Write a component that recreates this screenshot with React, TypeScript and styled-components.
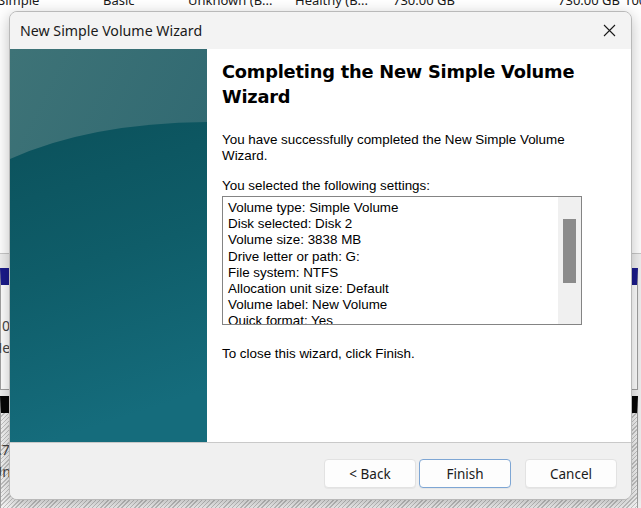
import React from "react";
import styled, { createGlobalStyle } from "styled-components";

const Global = createGlobalStyle`
  html, body { margin: 0; padding: 0; }
  body { width: 641px; height: 508px; overflow: hidden; background: #ffffff; }
`;

const Backdrop = styled.div`
  position: relative;
  width: 641px;
  height: 508px;
  overflow: hidden;
  display: flex;
  flex-direction: column;
  font-family: "Noto Sans", "Open Sans", sans-serif;
  font-size: 13px;
  color: #1a1a1a;
  background: #ffffff;
`;

const ListView = styled.div`
  height: 263px;
  margin-top: -10px;
  flex-shrink: 0;
  background: #ffffff;
  border-bottom: 1px solid #c8c8c8;
  display: flex;
  flex-direction: column;
`;

const ListRow = styled.div`
  display: grid;
  grid-template-columns: 105px 85px 107px 98px 77px 150px 50px;
  height: 20px;
  align-items: center;
  white-space: nowrap;
  margin-left: -2px;
`;

const Cell = styled.span<{ $right?: boolean; $pl?: number }>`
  text-align: ${(p) => (p.$right ? "right" : "left")};
  padding-left: ${(p) => p.$pl ?? 0}px;
  overflow: hidden;
`;

const GraphView = styled.div`
  flex: 1;
  background: #f0f0f0;
  display: flex;
  flex-direction: column;
  gap: 6px;
  padding-top: 14px;
`;

const Partition = styled.div<{ $head: string; $hatched?: boolean; $h: number }>`
  height: ${(p) => p.$h}px;
  flex-shrink: 0;
  margin-right: 3px;
  border: 1px solid #a0a0a0;
  border-top: 17px solid ${(p) => p.$head};
  background: ${(p) =>
    p.$hatched
      ? "repeating-linear-gradient(135deg, #f4f4f4 0 2px, #c4c4c4 2px 3px)"
      : "#ffffff"};
  display: flex;
  flex-direction: column;
  justify-content: center;
  line-height: 22px;
  font-size: 14px;
  color: #444;
`;

const PartText = styled.span<{ $shift: number }>`
  margin-left: ${(p) => p.$shift}px;
  white-space: nowrap;
`;

const Dialog = styled.div`
  position: absolute;
  left: 9px;
  top: 11px;
  width: 621px;
  height: 487px;
  border: 1px solid #b9b9b9;
  border-radius: 8px;
  background: #f0f0f0;
  box-shadow: 0 4px 16px rgba(0, 0, 0, 0.25);
  display: flex;
  flex-direction: column;
  overflow: hidden;
`;

const TitleBar = styled.div`
  height: 37px;
  flex-shrink: 0;
  display: flex;
  align-items: center;
  justify-content: space-between;
  padding: 0 15px 0 10px;
  background: #f3f3f3;
  font-family: "Noto Sans", "Open Sans", sans-serif;
  font-size: 14.2px;
  color: #1a1a1a;
`;

const CloseButton = styled.button`
  border: none;
  background: transparent;
  padding: 0;
  width: 14px;
  height: 14px;
  display: flex;
  align-items: center;
  justify-content: center;
`;

const Body = styled.div`
  height: 393px;
  flex-shrink: 0;
  display: flex;
  background: #ffffff;
  border-bottom: 1px solid #c9c9c9;
`;

const Banner = styled.div`
  width: 197px;
  flex-shrink: 0;
  display: flex;
`;

const Content = styled.div`
  flex: 1;
  padding: 10px 0 0 15px;
  display: flex;
  flex-direction: column;
  font-family: "Liberation Sans", Arial, sans-serif;
  font-size: 13.4px;
  color: #000;
`;

const Heading = styled.h1`
  margin: 0;
  font-family: "DejaVu Sans", Verdana, sans-serif;
  font-weight: bold;
  font-size: 17.8px;
  line-height: 25px;
  letter-spacing: -0.2px;
  color: #000;
  width: 390px;
`;

const Para = styled.p<{ $mt: number }>`
  margin: ${(p) => p.$mt}px 0 0 0;
  line-height: 16px;
  width: 360px;
`;

const SettingsBox = styled.div`
  margin-top: 2px;
  width: 358px;
  height: 127px;
  border: 1px solid #848484;
  display: flex;
  background: #ffffff;
`;

const SettingsList = styled.div`
  flex: 1;
  padding: 3px 0 0 5px;
  overflow: hidden;
  line-height: 16.2px;
  white-space: nowrap;
`;

const ScrollTrack = styled.div`
  width: 23px;
  background: #f0f0f0;
  padding-top: 22px;
  display: flex;
  justify-content: center;
`;

const ScrollThumb = styled.div`
  width: 13px;
  height: 64px;
  background: #8b8b8b;
`;

const Footer = styled.div`
  flex: 1;
  display: flex;
  align-items: center;
  justify-content: flex-end;
  padding: 5px 14px 0 0;
  background: #f0f0f0;
`;

const Btn = styled.button<{ $default?: boolean; $ml?: number }>`
  width: 92px;
  height: 29px;
  margin-left: ${(p) => p.$ml ?? 0}px;
  border: 1px solid ${(p) => (p.$default ? "#7ea6d4" : "#e2e2e2")};
  border-radius: 4px;
  background: #fdfdfd;
  font-family: "Noto Sans", "Open Sans", sans-serif;
  font-size: 13.5px;
  color: #1a1a1a;
  padding: 0;
  box-shadow: 0 1px 0 rgba(0, 0, 0, 0.04);
`;

const settings = [
  "Volume type: Simple Volume",
  "Disk selected: Disk 2",
  "Volume size: 3838 MB",
  "Drive letter or path: G:",
  "File system: NTFS",
  "Allocation unit size: Default",
  "Volume label: New Volume",
  "Quick format: Yes",
  "",
];

const topRow = ["Simple", "Basic", "Unknown (B...", "Healthy (B...", "730.00 GB", "730.00 GB", "100 %"];

const BannerArt = () => (
  <svg width="197" height="393" viewBox="0 0 197 393" preserveAspectRatio="none">
    <defs>
      <linearGradient id="topg" x1="0" y1="0" x2="1" y2="1">
        <stop offset="0" stopColor="#3e7377" />
        <stop offset="1" stopColor="#29646f" />
      </linearGradient>
      <linearGradient id="lowg" x1="0" y1="0" x2="0.2" y2="1">
        <stop offset="0" stopColor="#0b515b" />
        <stop offset="0.5" stopColor="#0f5d69" />
        <stop offset="1" stopColor="#156c7c" />
      </linearGradient>
    </defs>
    <rect x="0" y="0" width="197" height="393" fill="url(#topg)" />
    <path d="M0,110 Q80,74 197,73 L197,393 L0,393 Z" fill="url(#lowg)" />
  </svg>
);

export default function App() {
  return (
    <>
      <Global />
      <Backdrop>
        <ListView>
          <ListRow>
            {topRow.map((c, j) => (
              <Cell key={j} $right={j === 5} $pl={j === 6 ? 4 : 0}>
                {c}
              </Cell>
            ))}
          </ListRow>
        </ListView>
        <GraphView>
          <Partition $head="#1b1b8c" $h={104}>
            <PartText $shift={-7}>100 MB NTFS</PartText>
            <PartText $shift={-9}>Healthy (EFI)</PartText>
          </Partition>
          <Partition $head="#050505" $h={96} $hatched>
            <PartText $shift={-11}>3.75 GB</PartText>
            <PartText $shift={-9}>Unallocated</PartText>
          </Partition>
        </GraphView>

        <Dialog>
          <TitleBar>
            <span>New Simple Volume Wizard</span>
            <CloseButton aria-label="Close">
              <svg width="13" height="13" viewBox="0 0 13 13">
                <path d="M1 1 L12 12 M12 1 L1 12" stroke="#1a1a1a" strokeWidth="1.1" />
              </svg>
            </CloseButton>
          </TitleBar>
          <Body>
            <Banner>
              <BannerArt />
            </Banner>
            <Content>
              <Heading>Completing the New Simple Volume Wizard</Heading>
              <Para $mt={23}>You have successfully completed the New Simple Volume Wizard.</Para>
              <Para $mt={14}>You selected the following settings:</Para>
              <SettingsBox>
                <SettingsList>
                  {settings.map((s, i) => (
                    <div key={i}>{s}</div>
                  ))}
                </SettingsList>
                <ScrollTrack>
                  <ScrollThumb />
                </ScrollTrack>
              </SettingsBox>
              <Para $mt={21}>To close this wizard, click Finish.</Para>
            </Content>
          </Body>
          <Footer>
            <Btn>&lt; Back</Btn>
            <Btn $default $ml={3}>Finish</Btn>
            <Btn $ml={14}>Cancel</Btn>
          </Footer>
        </Dialog>
      </Backdrop>
    </>
  );
}
